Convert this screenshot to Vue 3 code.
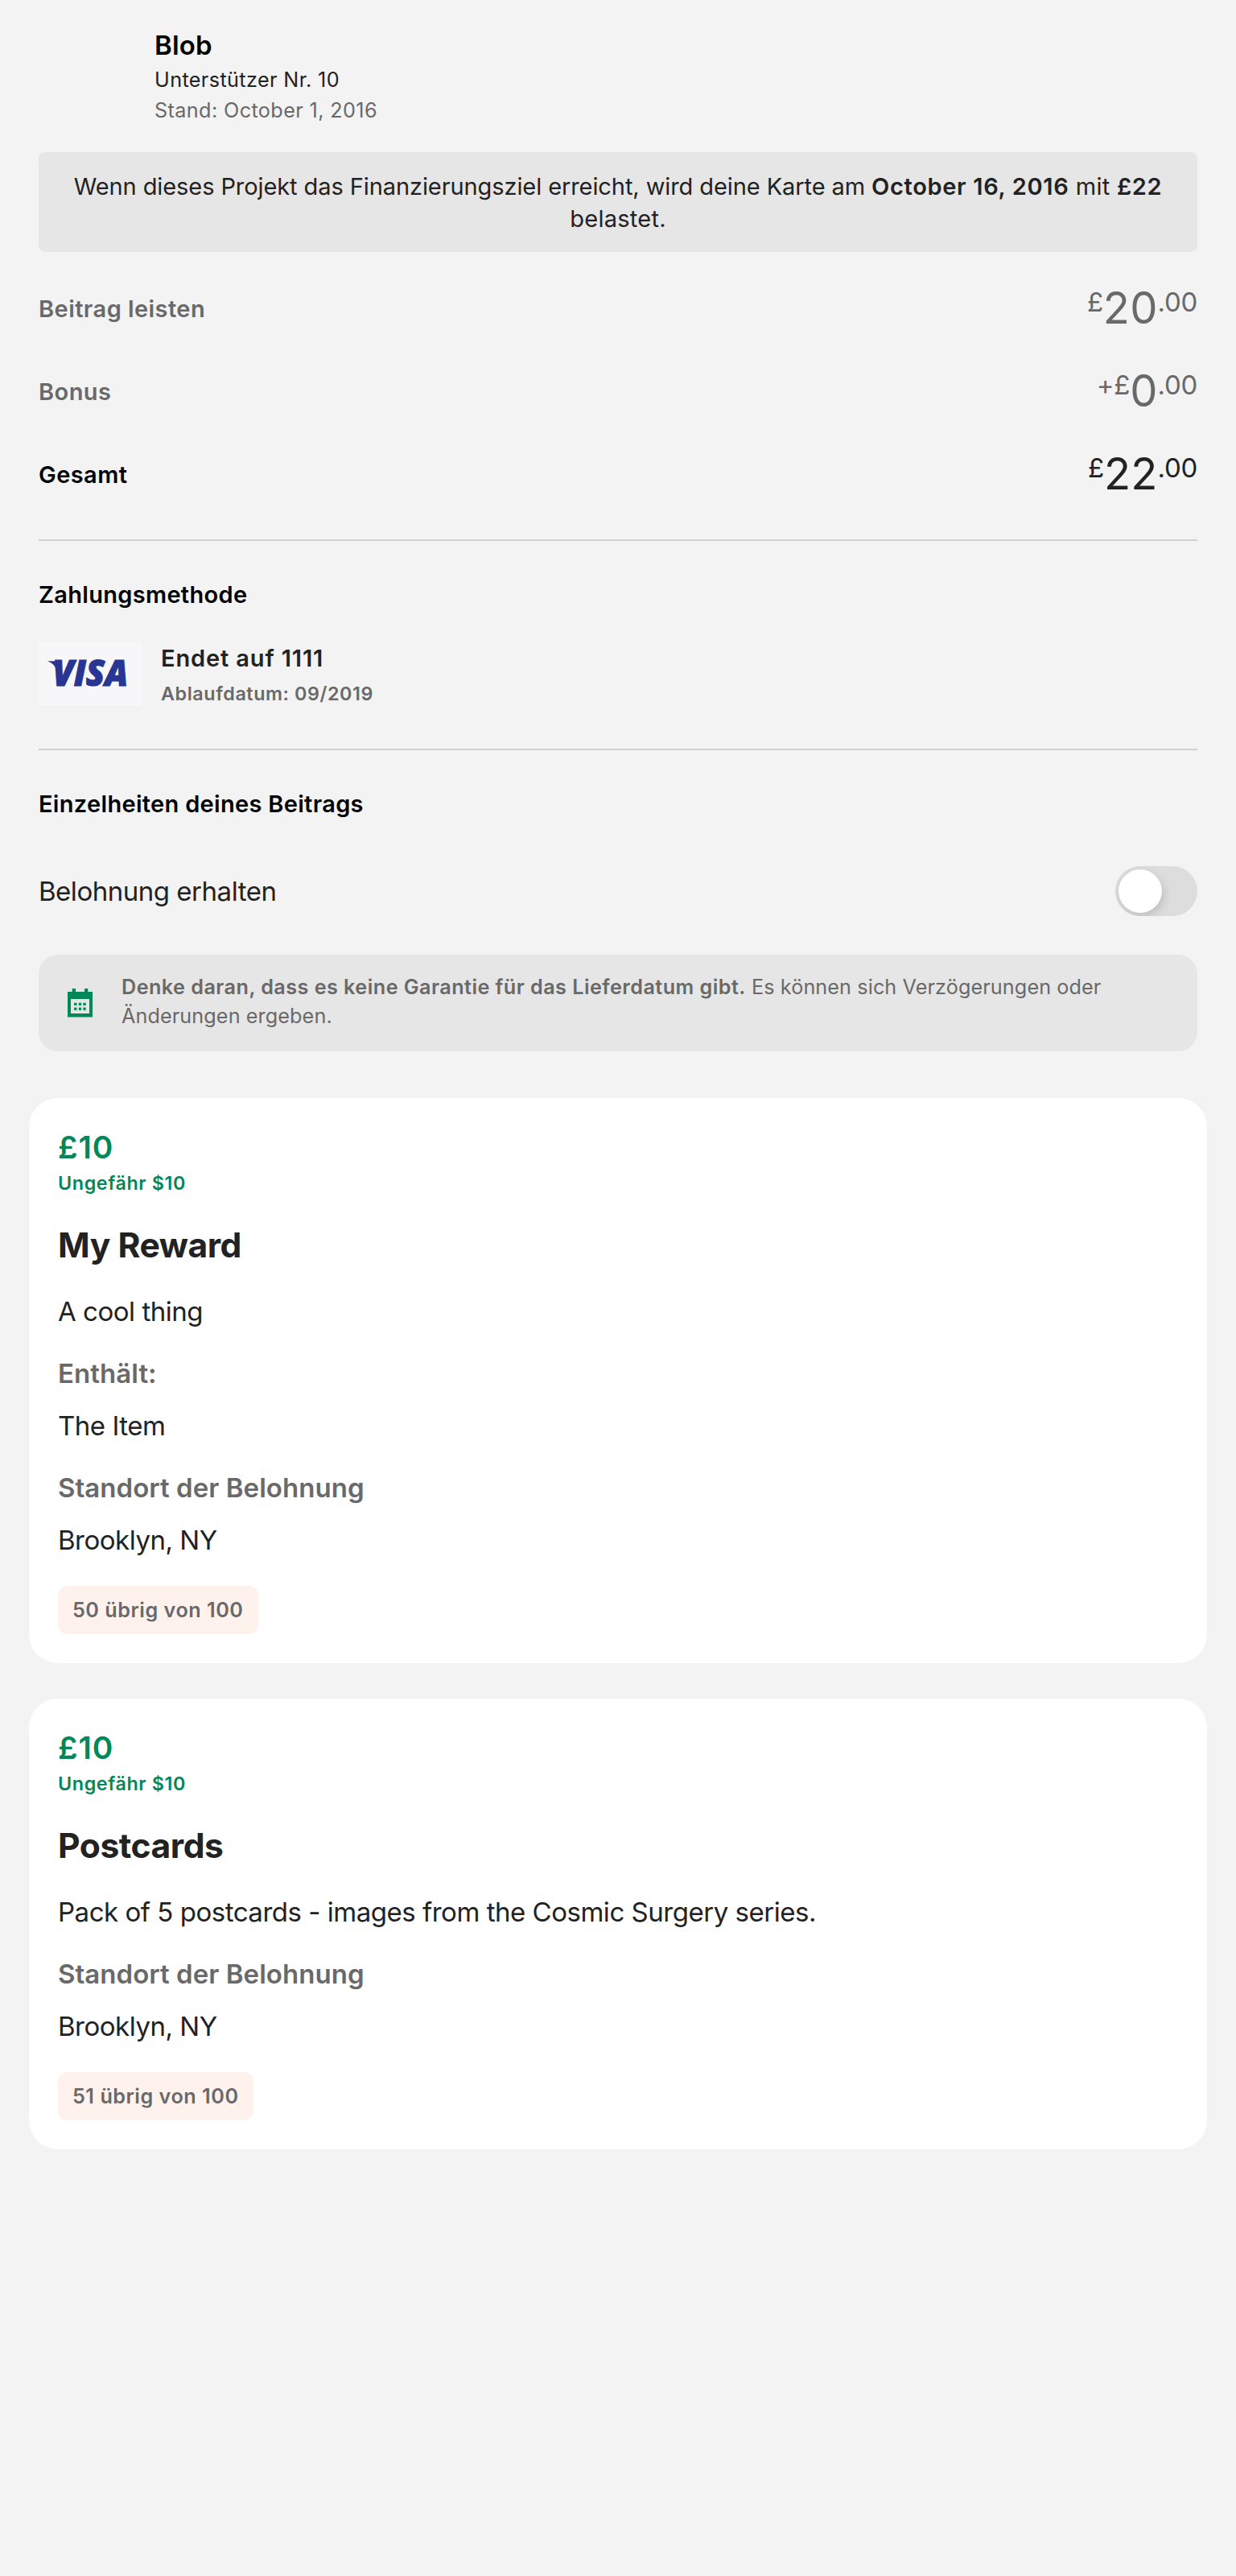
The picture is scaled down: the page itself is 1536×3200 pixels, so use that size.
<script setup>
const amounts = [
  { label: 'Beitrag leisten', sign: '£', whole: '20', cents: '.00' },
  { label: 'Bonus', sign: '+£', whole: '0', cents: '.00' },
  { label: 'Gesamt', sign: '£', whole: '22', cents: '.00', total: true },
]

const rewards = [
  {
    price: '£10',
    approx: 'Ungefähr $10',
    title: 'My Reward',
    description: 'A cool thing',
    item: 'The Item',
    location: 'Brooklyn, NY',
    remaining: '50 übrig von 100',
  },
  {
    price: '£10',
    approx: 'Ungefähr $10',
    title: 'Postcards',
    description: 'Pack of 5 postcards - images from the Cosmic Surgery series.',
    location: 'Brooklyn, NY',
    remaining: '51 übrig von 100',
  },
]
</script>

<template>
  <main class="page">
    <header class="backer">
      <h1>Blob</h1>
      <p>Unterstützer Nr. 10</p>
      <p class="muted">Stand: October 1, 2016</p>
    </header>

    <p class="charge-note">
      <span class="lead">Wenn dieses Projekt das Finanzierungsziel erreicht, wird deine Karte am </span>
      <strong>October 16, 2016</strong> mit <strong>£22</strong><br />belastet.
    </p>

    <section class="amounts">
      <div v-for="a in amounts" :key="a.label" class="amount-row" :class="{ total: a.total }">
        <span class="label">{{ a.label }}</span>
        <span class="amount"><span class="small">{{ a.sign }}</span><span class="big">{{ a.whole }}</span><span class="small">{{ a.cents }}</span></span>
      </div>
    </section>

    <hr />

    <section class="payment">
      <h2>Zahlungsmethode</h2>
      <div class="card-row">
        <div class="card-brand">
          <svg width="128" height="80" viewBox="0 0 128 80" role="img" aria-label="Visa">
            <path d="M10.5 24.3 H26 L24 32 H20.4 C19 28 15 25.8 10.5 24.3 Z" fill="#283593" />
            <text x="17.5" y="55.3" textLength="93.5" lengthAdjust="spacingAndGlyphs">VISA</text>
          </svg>
        </div>
        <div>
          <p class="ending">Endet auf 1111</p>
          <p class="expiry">Ablaufdatum: 09/2019</p>
        </div>
      </div>
    </section>

    <hr />

    <section class="details">
      <h2>Einzelheiten deines Beitrags</h2>
      <div class="toggle-row">
        <span class="body">Belohnung erhalten</span>
        <span class="toggle" role="switch" aria-checked="false"><span class="knob"></span></span>
      </div>
      <div class="delivery-note">
        <svg class="calendar" width="32" height="36" viewBox="0 0 32 36">
          <path fill="#028858" fill-rule="evenodd" d="M0 4H5.7V0H10V4H21V0H25.3V4H31V35.5H0ZM4 13V31H27V13Z" />
          <g fill="#028858">
            <rect x="8.1" y="17.7" width="3.3" height="3.3" />
            <rect x="13.8" y="17.7" width="3.3" height="3.3" />
            <rect x="19.4" y="17.7" width="3.3" height="3.3" />
            <rect x="8.1" y="23.6" width="3.3" height="3.3" />
            <rect x="13.8" y="23.6" width="3.3" height="3.3" />
            <rect x="19.4" y="23.6" width="3.3" height="3.3" />
          </g>
        </svg>
        <p>
          <strong>Denke daran, dass es keine Garantie für das Lieferdatum gibt.</strong> Es können sich Verzögerungen oder<br />Änderungen ergeben.
        </p>
      </div>
    </section>

    <section class="rewards">
      <article v-for="r in rewards" :key="r.title" class="reward">
        <p class="price">{{ r.price }}</p>
        <p class="approx">{{ r.approx }}</p>
        <h3>{{ r.title }}</h3>
        <p class="body desc">{{ r.description }}</p>
        <template v-if="r.item">
          <h4>Enthält:</h4>
          <p class="body">{{ r.item }}</p>
        </template>
        <h4>Standort der Belohnung</h4>
        <p class="body place">{{ r.location }}</p>
        <span class="chip">{{ r.remaining }}</span>
      </article>
    </section>
  </main>
</template>

<style>
body {
  background: #f3f3f3;
}
</style>

<style scoped>
.page {
  box-sizing: border-box;
  min-height: 3200px;
  padding: 36px 48px 0;
  background: #f3f3f3;
  color: #222;
  font-family: Inter, 'Liberation Sans', sans-serif;
}
h1, h2, h3, h4, p {
  margin: 0;
  white-space: nowrap;
}
strong {
  font-weight: 600;
}
hr {
  height: 2px;
  margin: 0;
  border: 0;
  background: #d1d1d1;
}

.backer {
  padding-left: 144px;
  height: 153px;
  box-sizing: border-box;
}
.backer h1 {
  margin-bottom: 4px;
  color: #000;
  font-size: 33px;
  font-weight: 600;
  line-height: 40px;
  letter-spacing: 0.17px;
}
.backer p {
  font-size: 25.2px;
  line-height: 38px;
  letter-spacing: 0.39px;
}
.backer .muted {
  color: #696969;
}

.charge-note {
  box-sizing: border-box;
  height: 124px;
  padding-top: 23px;
  border-radius: 8px;
  background: #e6e6e6;
  font-size: 29px;
  line-height: 40px;
  letter-spacing: 0.26px;
  text-align: center;
}
.charge-note .lead {
  letter-spacing: -0.089px;
}
.charge-note strong {
  letter-spacing: 0.66px;
}

.amounts {
  padding-top: 19px;
  height: 357px;
  box-sizing: border-box;
}
.amount-row {
  display: flex;
  align-items: center;
  justify-content: space-between;
  height: 103px;
  color: #696969;
}
.amount-row.total {
  color: #222;
}
.label {
  font-size: 29px;
  font-weight: 600;
  line-height: 40px;
  letter-spacing: 0.44px;
}
.total .label {
  color: #000;
}
.amount {
  padding-bottom: 4px;
  line-height: 64px;
  font-size: 54.3px;
}
.big {
  letter-spacing: 0.2px;
}
.small {
  font-size: 33px;
  line-height: 0;
  vertical-align: 15px;
  letter-spacing: -0.3px;
}

h2 {
  color: #000;
  font-size: 29px;
  font-weight: 600;
  line-height: 40px;
  letter-spacing: 0.31px;
}
.payment {
  box-sizing: border-box;
  height: 258px;
  padding-top: 47px;
}
.card-row {
  display: flex;
  gap: 24px;
  margin-top: 38px;
}
.card-brand {
  width: 128px;
  height: 80px;
  border-radius: 4px;
  background: #f7f7fa;
}
.card-brand svg {
  display: block;
}
.card-brand text {
  fill: #283593;
  stroke: #283593;
  stroke-width: 1.2px;
  font: italic 800 43.5px 'Open Sans', 'Noto Sans', sans-serif;
}
.ending {
  padding-top: 1px;
  font-size: 29px;
  font-weight: 600;
  line-height: 40px;
  letter-spacing: 0.86px;
}
.expiry {
  margin-top: 6px;
  color: #696969;
  font-size: 23.3px;
  font-weight: 600;
  line-height: 36px;
  letter-spacing: 0.59px;
}

.details {
  padding-top: 47px;
}
.toggle-row {
  display: flex;
  align-items: center;
  justify-content: space-between;
  height: 62px;
  margin-top: 57px;
}
.body {
  font-size: 33px;
  line-height: 40px;
  letter-spacing: -0.48px;
}
.toggle {
  box-sizing: border-box;
  width: 102px;
  height: 62px;
  padding: 4px;
  border-radius: 31px;
  background: #ddd;
  overflow: hidden;
}
.knob {
  display: block;
  width: 54px;
  height: 54px;
  border-radius: 50%;
  background: #fff;
  box-shadow: 2px 4px 12px rgba(0, 0, 0, 0.15);
}
.delivery-note {
  box-sizing: border-box;
  display: flex;
  height: 120px;
  margin-top: 48px;
  padding: 22px 36px 0;
  border-radius: 24px;
  background: #e6e6e6;
  color: #696969;
}
.calendar {
  flex: none;
  margin: 20px 35px 0 0;
}
.delivery-note p {
  font-size: 25.2px;
  line-height: 36px;
  letter-spacing: 0.1px;
}
.delivery-note strong {
  letter-spacing: 0.46px;
}

.rewards {
  display: flex;
  flex-direction: column;
  gap: 44px;
  margin: 58px -12px 0;
}
.reward {
  padding: 37px 36px 36px;
  border-radius: 36px;
  background: #fff;
}
.price {
  color: #028858;
  font-size: 38.8px;
  font-weight: 600;
  line-height: 48px;
  letter-spacing: 1px;
}
.approx {
  margin-top: 5px;
  color: #028858;
  font-size: 23.3px;
  font-weight: 600;
  line-height: 32px;
  letter-spacing: 0.62px;
}
h3 {
  margin-top: 35px;
  font-size: 42.6px;
  font-weight: 700;
  line-height: 52px;
  letter-spacing: -0.47px;
}
.desc {
  margin-top: 36px;
}
h4 {
  margin-top: 37px;
  color: #696969;
  font-size: 33px;
  font-weight: 600;
  line-height: 40px;
  letter-spacing: 0.04px;
}
h4 + .body {
  margin-top: 25px;
}
.chip {
  display: block;
  box-sizing: border-box;
  width: fit-content;
  height: 60px;
  margin-top: 37px;
  padding: 0 18px;
  border-radius: 12px;
  background: #fff2ed;
  color: #696969;
  font-size: 25.2px;
  font-weight: 600;
  line-height: 60px;
  letter-spacing: 0.52px;
}
</style>
